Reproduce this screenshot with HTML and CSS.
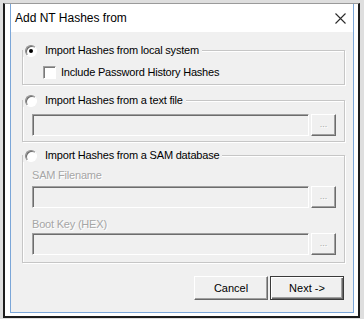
FILE: index.html
```html
<!DOCTYPE html>
<html lang="en">
  <head>
    <meta charset="UTF-8" />
    <title>Add NT Hashes from</title>
    <link rel="stylesheet" href="styles.css">
  </head>
  <body>
    <div class="frame">
      <div class="window">
        <div class="titlebar">
          <span class="title">Add NT Hashes from</span>
          <svg class="close" width="11" height="11" viewBox="0 0 11 11">
            <path d="M0.5 0.5 L10.5 10.5 M10.5 0.5 L0.5 10.5" stroke="#2b2b2b" stroke-width="1.1" fill="none" />
          </svg>
        </div>

        <div class="client">
          <fieldset class="group g1">
            <legend><span class="radio checked"></span>Import Hashes from local system</legend>
            <div class="body">
              <div class="check"><span class="box"></span>Include Password History Hashes</div>
            </div>
          </fieldset>

          <fieldset class="group g2">
            <legend><span class="radio"></span>Import Hashes from a text file</legend>
            <div class="body">
              <div class="filerow">
                <div class="input"></div>
                <div class="browse">...</div>
              </div>
            </div>
          </fieldset>

          <fieldset class="group g3">
            <legend><span class="radio"></span>Import Hashes from a SAM database</legend>
            <div class="body">
              <div class="label">SAM Filename</div>
              <div class="filerow">
                <div class="input"></div>
                <div class="browse">...</div>
              </div>
              <div class="label second">Boot Key (HEX)</div>
              <div class="filerow">
                <div class="input"></div>
                <div class="browse">...</div>
              </div>
            </div>
          </fieldset>

          <div class="actions">
            <button class="btn">Cancel</button>
            <button class="btn default">Next -&gt;</button>
          </div>
        </div>
      </div>
    </div>
  </body>
</html>
```

FILE: styles.css
```css
body {
  margin: 0;
  background: #dedede;
  font-family: "Liberation Sans", Arial, sans-serif;
  font-size: 11px;
  color: #000;
}

.frame {
  margin: 3px 0 0 3px;
  width: 357px;
  box-sizing: border-box;
  border: 2px solid #1c1c1c;
  border-top: 1px solid #9a9a9a;
  background: #fff;
  padding: 0 4px 3px 5px;
}

.window {
  border: 1px solid #7ba6d8;
  border-top: 0;
  background: #f0f0f0;
}

.titlebar {
  height: 28px;
  background: #fff;
  display: flex;
  align-items: center;
  justify-content: space-between;
  padding: 0 7px 0 4px;
}

.title {
  font-size: 12px;
}

.client {
  height: 280px;
  box-sizing: border-box;
  padding: 12px 8px 0 11px;
  display: flex;
  flex-direction: column;
  letter-spacing: -0.2px;
}

/* group boxes */

.group {
  margin: 0;
  padding: 0;
  min-width: 0;
  border: 1px solid #c6c6c6;
  box-shadow: inset 1px 1px 0 #fff, 1px 1px 0 #fff;
}

.group legend {
  display: flex;
  align-items: center;
  gap: 8px;
  padding: 0 3px 0 2px;
  line-height: 13px;
  background: #f0f0f0;
}

.g1 .body {
  padding: 9px 0 5px 20px;
}

.g2 {
  margin-top: 9px;
}

.g2 .body {
  padding: 7px 8px 5px 9px;
}

.g3 {
  margin-top: 7px;
}

.g3 .body {
  padding: 7px 8px 7px 9px;
}

/* controls */

.radio {
  width: 12px;
  height: 12px;
  box-sizing: border-box;
  border-radius: 50%;
  border: 1px solid;
  border-color: #8a8a8a #fff #fff #8a8a8a;
  box-shadow: inset 1px 1px 0 #6a6a6a;
  background: #fff;
  display: flex;
  align-items: center;
  justify-content: center;
}

.radio.checked::after {
  content: "";
  width: 4px;
  height: 4px;
  border-radius: 50%;
  background: #000;
}

.check {
  display: flex;
  align-items: center;
  gap: 5px;
  line-height: 13px;
}

.box {
  width: 13px;
  height: 13px;
  box-sizing: border-box;
  border: 1px solid;
  border-color: #a0a0a0 #fff #fff #a0a0a0;
  box-shadow: inset 1px 1px 0 #7a7a7a;
  background: #fff;
}

.label {
  color: #a6a6a6;
  text-shadow: 1px 1px 0 #fff;
  line-height: 13px;
  margin-bottom: 4px;
}

.label.second {
  margin-top: 10px;
  margin-bottom: 2px;
}

.filerow {
  display: flex;
  gap: 2px;
}

.input {
  flex: 1;
  height: 22px;
  box-sizing: border-box;
  border: 1px solid;
  border-color: #a0a0a0 #fff #fff #a0a0a0;
  box-shadow: inset 1px 1px 0 #6d6d6d;
  background: #f0f0f0;
}

.browse {
  width: 25px;
  height: 22px;
  box-sizing: border-box;
  border: 1px solid;
  border-color: #fff #6d6d6d #6d6d6d #fff;
  box-shadow: inset -1px -1px 0 #a0a0a0;
  color: #a8a8a8;
  text-shadow: 1px 1px 0 #fff;
  font-size: 9px;
  line-height: 18px;
  text-align: center;
  letter-spacing: 0;
}

/* buttons */

.actions {
  display: flex;
  justify-content: flex-end;
  gap: 2px;
  margin-top: 13px;
  padding-right: 1px;
}

.btn {
  width: 74px;
  height: 24px;
  font: inherit;
  color: #000;
  background: #f0f0f0;
  border: 1px solid;
  border-color: #fff #696969 #696969 #fff;
  box-shadow: inset -1px -1px 0 #a0a0a0;
  padding: 0;
}

.btn.default {
  border: 1px solid #3a3a3a;
  box-shadow: inset 1px 1px 0 #fff, inset -1px -1px 0 #696969, inset -2px -2px 0 #a0a0a0;
}
```
